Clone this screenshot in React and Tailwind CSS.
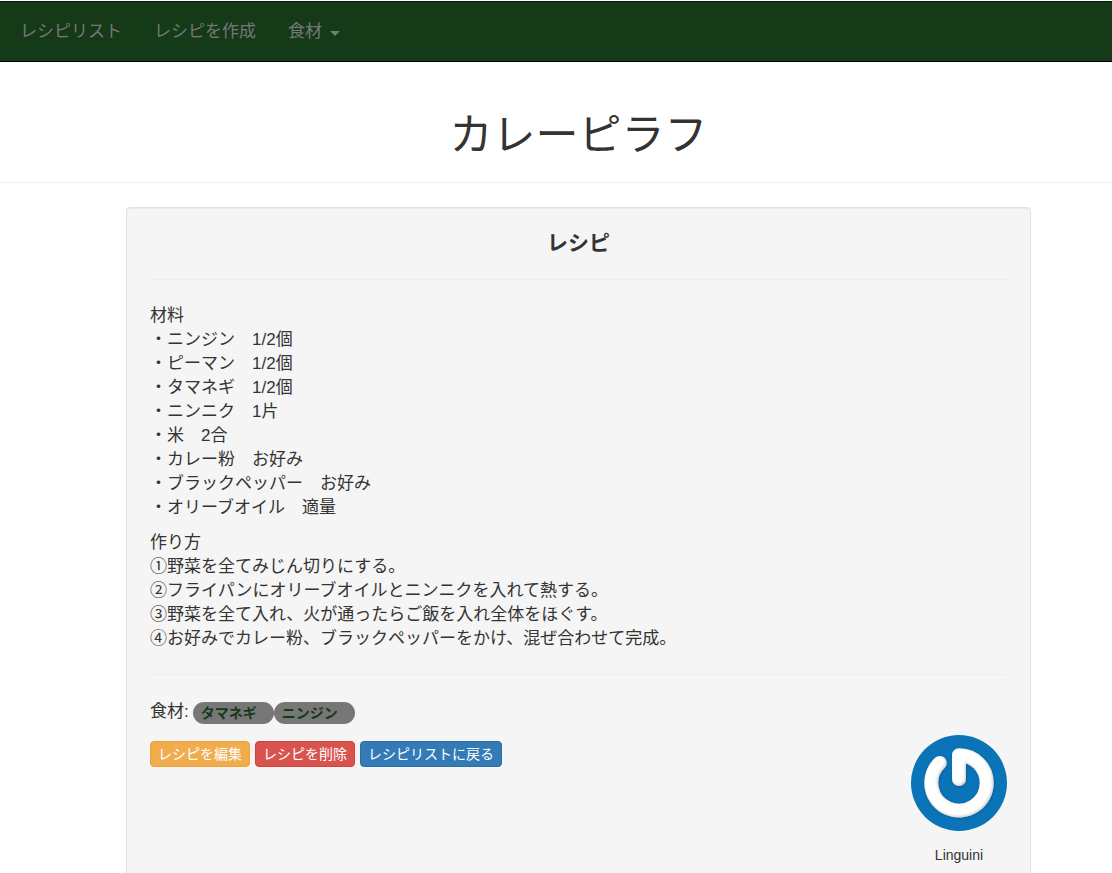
const ingredients = [
  '・ニンジン　1/2個',
  '・ピーマン　1/2個',
  '・タマネギ　1/2個',
  '・ニンニク　1片',
  '・米　2合',
  '・カレー粉　お好み',
  '・ブラックペッパー　お好み',
  '・オリーブオイル　適量',
];

const steps = [
  '①野菜を全てみじん切りにする。',
  '②フライパンにオリーブオイルとニンニクを入れて熱する。',
  '③野菜を全て入れ、火が通ったらご飯を入れ全体をほぐす。',
  '④お好みでカレー粉、ブラックペッパーをかけ、混ぜ合わせて完成。',
];

function Navbar() {
  return (
    <nav className="mt-px flex items-center gap-8 border-y border-t-[#081c0b] border-b-black bg-[#143a18] px-5 pt-[18px] pb-[17px] leading-6 text-[#777777]">
      <a href="#recipes">レシピリスト</a>
      <a href="#new">レシピを作成</a>
      <button type="button" className="flex items-center gap-2">
        食材
        <svg width="10" height="5" viewBox="0 0 10 5" className="mt-0.5" fill="currentColor" aria-hidden="true">
          <path d="M0 0h10L5 5z" />
        </svg>
      </button>
    </nav>
  );
}

function Avatar() {
  return (
    <svg viewBox="0 0 96 96" className="size-24" role="img" aria-label="Linguini">
      <defs>
        <filter id="bevel" filterUnits="userSpaceOnUse" x="0" y="0" width="96" height="96">
          <feGaussianBlur in="SourceAlpha" stdDeviation="1.8" result="soft" />
          <feOffset in="soft" dx="-1.5" dy="-1.5" result="moved" />
          <feComposite in="SourceAlpha" in2="moved" operator="out" result="edge" />
          <feFlood floodColor="#8d8d8d" floodOpacity="0.6" />
          <feComposite in2="edge" operator="in" result="shade" />
          <feDropShadow in="SourceGraphic" dx="0.5" dy="0.5" stdDeviation="0.8" floodColor="#00406f" floodOpacity="0.6" result="base" />
          <feMerge>
            <feMergeNode in="base" />
            <feMergeNode in="shade" />
          </feMerge>
        </filter>
      </defs>
      <circle cx="48" cy="48" r="48" fill="#0b74b8" />
      <path
        d="M48 44V20.300C63.500 20.300 75.700 32.700 75.700 48A27.700 27.700 0 1 1 28.700 28"
        fill="none"
        stroke="#ffffff"
        strokeWidth="14"
        strokeLinecap="round"
        strokeLinejoin="round"
        filter="url(#bevel)"
      />
    </svg>
  );
}

export default function App() {
  return (
    <div className="flex min-h-screen flex-col bg-white font-['Liberation_Sans','Noto_Sans_CJK_JP',sans-serif] text-[17px] leading-6 text-[#333333]">
      <Navbar />
      <header className="border-b border-[#eeeeee] pt-12 pb-[22px] pl-[45px] text-center">
        <h1 className="text-[43px] leading-[50px]">カレーピラフ</h1>
      </header>
      <main className="flex grow flex-col items-center pt-6 pl-[45px]">
        <section className="flex w-full max-w-[905px] grow flex-col rounded-t border border-b-0 border-[#e3e3e3] bg-[#f5f5f5] px-[23px] pt-[23px] shadow-[inset_0_1px_1px_rgba(0,0,0,0.05)]">
          <h2 className="text-center text-[21px] leading-6 font-bold">レシピ</h2>
          <hr className="my-6 border-[#eeeeee]" />
          <div>
            <p>材料</p>
            <ul>
              {ingredients.map((item) => (
                <li key={item}>{item}</li>
              ))}
            </ul>
          </div>
          <div className="mt-[11px]">
            <p>作り方</p>
            <ul>
              {steps.map((step) => (
                <li key={step}>{step}</li>
              ))}
            </ul>
          </div>
          <hr className="mt-[23px] mb-[25px] border-[#eeeeee]" />
          <div className="flex items-center">
            <span className="mr-1">食材:</span>
            <a href="#onion" className="mt-0.5 rounded-full bg-[#777777] pr-[17px] pl-2 text-sm leading-[22px] font-bold text-[#143a18]">
              タマネギ
            </a>
            <a href="#carrot" className="mt-0.5 rounded-full bg-[#777777] pr-[17px] pl-2 text-sm leading-[22px] font-bold text-[#143a18]">
              ニンジン
            </a>
          </div>
          <div className="flex items-start justify-between pt-[11px]">
            <div className="flex gap-[5px] pt-1.5 text-sm leading-6 text-white">
              <a href="#edit" className="rounded border border-[#eea236] bg-[#f0ad4e] px-[7px]">
                レシピを編集
              </a>
              <button type="button" className="rounded border border-[#d43f3a] bg-[#d9534f] px-[7px]">
                レシピを削除
              </button>
              <a href="#back" className="rounded border border-[#2e6da4] bg-[#337ab7] px-[7px]">
                レシピリストに戻る
              </a>
            </div>
            <figure className="flex flex-col items-center gap-3">
              <Avatar />
              <figcaption className="text-sm leading-6">Linguini</figcaption>
            </figure>
          </div>
        </section>
      </main>
    </div>
  );
}
